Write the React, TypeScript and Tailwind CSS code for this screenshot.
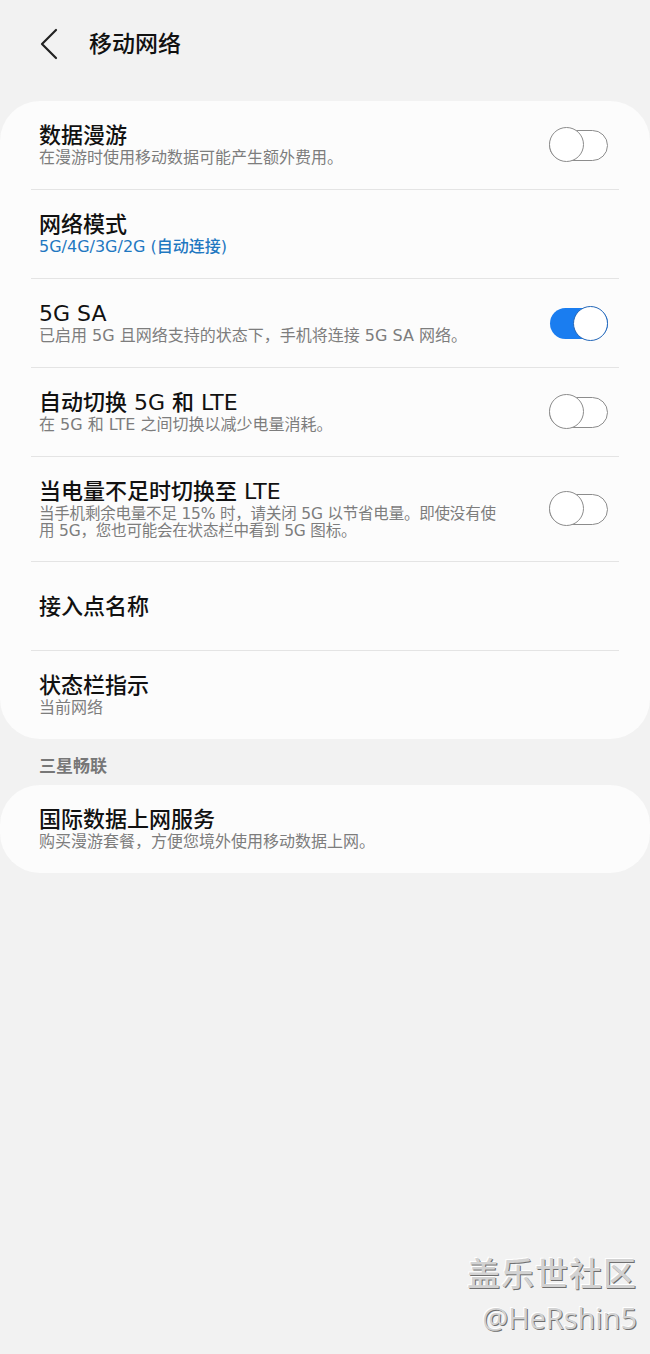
import React from 'react';

type RowProps = {
  title: string;
  sub?: React.ReactNode;
  blue?: boolean;
  toggle?: 'on' | 'off';
  tall?: boolean;
};

function Toggle({ on }: { on: boolean }) {
  if (on) {
    return (
      <div className="relative w-[58px] h-[31px] rounded-full bg-[#1a7df0] mr-[42px] shrink-0">
        <div className="absolute right-0 top-[-2px] w-[35px] h-[35px] rounded-full bg-white border-[1.5px] border-[#2467b8]" />
      </div>
    );
  }
  return (
    <div className="relative w-[59px] h-[31px] rounded-full border-[1.5px] border-[#8c8c8c] bg-white mr-[42px] shrink-0">
      <div className="absolute left-[-1.5px] top-[-3.5px] w-[35px] h-[35px] rounded-full bg-white border-[1.5px] border-[#8c8c8c]" />
    </div>
  );
}

function Row({ title, sub, blue, toggle, tall }: RowProps) {
  return (
    <div className={`flex items-center ${tall ? 'h-[104px]' : 'h-[88px]'}`}>
      <div className="flex-1 pl-[39px] pr-4">
        <div className="text-[22px] leading-[25px] font-medium text-[#111]">{title}</div>
        {sub && (
          <div
            className={`${tall ? 'text-[15.5px] leading-[17px] mt-[2px] tracking-[-0.2px]' : 'text-[16px] leading-[20px]'} ${
              blue ? 'text-[#1f78c1] font-medium' : 'text-[#7d7d7d]'
            }`}
          >
            {sub}
          </div>
        )}
      </div>
      {toggle && <Toggle on={toggle === 'on'} />}
    </div>
  );
}

function Divider() {
  return <div className="mx-[31px] h-px bg-[#e4e4e4]" />;
}

export default function App() {
  return (
    <div className="relative w-full min-h-[1354px] bg-[#f2f2f2] font-['DejaVu_Sans','Noto_Sans_CJK_SC',sans-serif] overflow-hidden">
      <div className="h-[88px] flex items-center">
        <svg className="ml-[38px]" width="22" height="32" viewBox="0 0 22 32" fill="none">
          <path d="M18 2 L4 16 L18 30" stroke="#222" strokeWidth="2.2" strokeLinecap="round" strokeLinejoin="round" />
        </svg>
        <div className="ml-[29px] text-[23px] font-medium text-[#111]">移动网络</div>
      </div>

      <div className="mt-[13px] bg-[#fcfcfc] rounded-[40px]">
        <Row title="数据漫游" sub="在漫游时使用移动数据可能产生额外费用。" toggle="off" />
        <Divider />
        <Row title="网络模式" sub="5G/4G/3G/2G (自动连接)" blue />
        <Divider />
        <Row title="5G SA" sub="已启用 5G 且网络支持的状态下，手机将连接 5G SA 网络。" toggle="on" />
        <Divider />
        <Row title="自动切换 5G 和 LTE" sub="在 5G 和 LTE 之间切换以减少电量消耗。" toggle="off" />
        <Divider />
        <Row
          title="当电量不足时切换至 LTE"
          sub={
            <>
              当手机剩余电量不足 15% 时，请关闭 5G 以节省电量。即使没有使
              <br />
              用 5G，您也可能会在状态栏中看到 5G 图标。
            </>
          }
          toggle="off"
          tall
        />
        <Divider />
        <Row title="接入点名称" />
        <Divider />
        <Row title="状态栏指示" sub="当前网络" />
      </div>

      <div className="pt-[17px] pb-[8px] pl-[39px] text-[17px] leading-[21px] font-bold text-[#777]">三星畅联</div>

      <div className="bg-[#fcfcfc] rounded-[40px]">
        <Row title="国际数据上网服务" sub="购买漫游套餐，方便您境外使用移动数据上网。" />
      </div>

      <div className="absolute right-[13px] top-[1252px] flex flex-col items-end text-[#d2d2d2] [text-shadow:1px_1px_0_#6f6f6f,-1px_-1px_0_#ffffff]">
        <div className="text-[33px] leading-[40px] tracking-[1px] font-medium font-['Noto_Sans_CJK_SC',sans-serif]">盖乐世社区</div>
        <div className="text-[29px] leading-[40px] mt-[6px] font-['Open_Sans',sans-serif]">@HeRshin5</div>
      </div>
    </div>
  );
}
